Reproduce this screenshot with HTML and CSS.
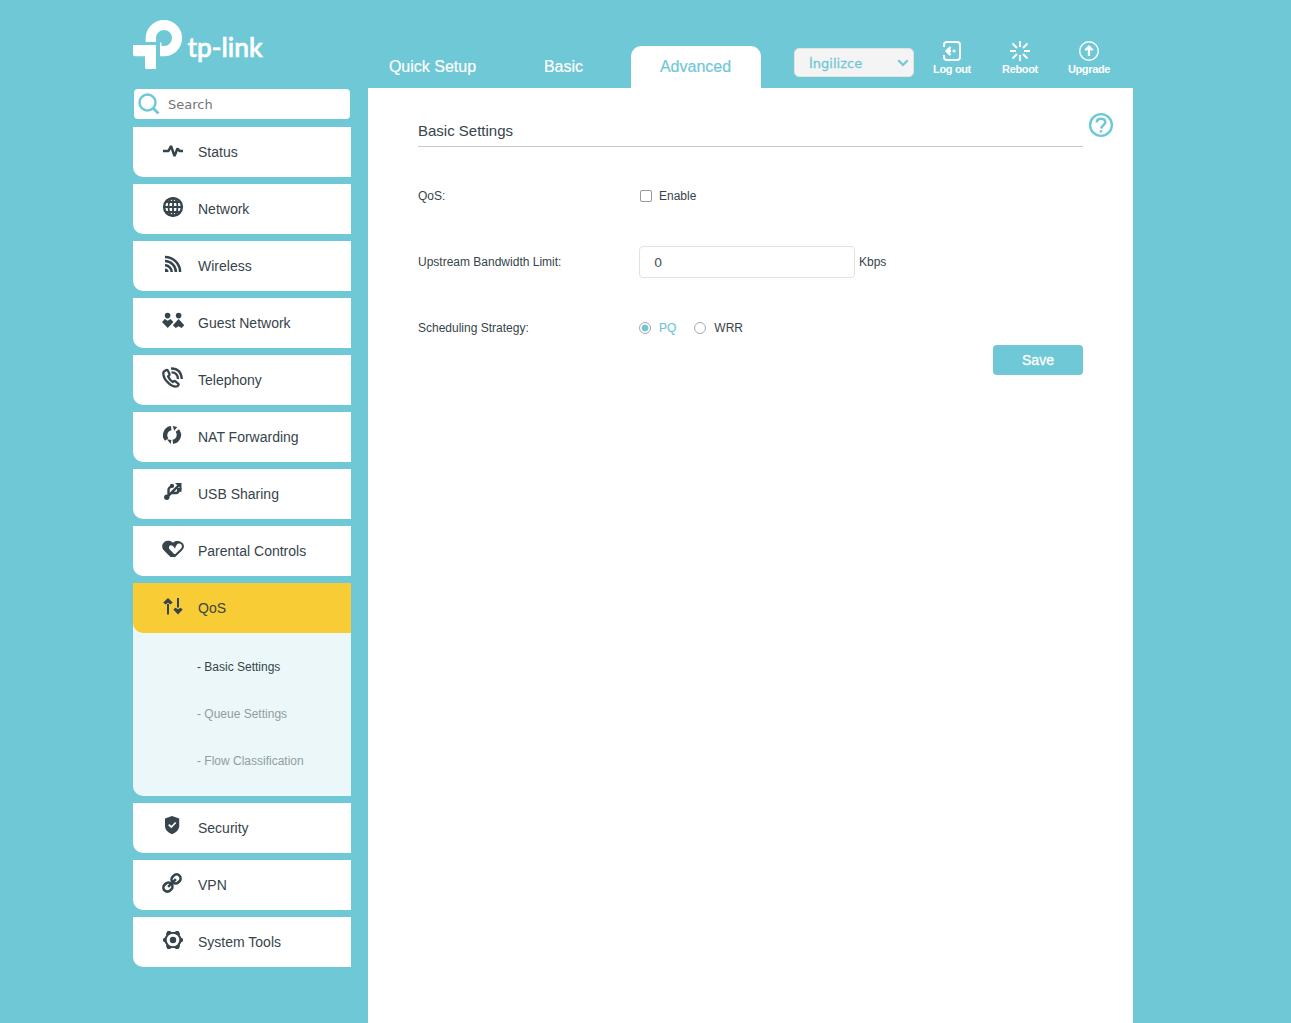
FILE: index.html
```html
<!DOCTYPE html>
<html lang="en">
<head>
<meta charset="utf-8">
<title>TP-Link Router</title>
<link rel="stylesheet" href="styles.css">
</head>
<body>
<div class="page">
  <header class="header">
    <svg class="logo" width="140" height="56" viewBox="0 0 140 56" fill="#fff">
      <path d="M12.7 24V20A18.2 18.2 0 1 1 31 38.3H27V24.500H28.500V28H31A8 8 0 1 0 23 20V24Z"/>
      <path d="M0 27H23V51H13.500Q12 51 12 49.500V38.300H2Q0 38.300 0 36.300Z"/>
      <text class="logo-text" x="54.500" y="38.500" textLength="75" lengthAdjust="spacingAndGlyphs">tp-link</text>
    </svg>
    <nav class="tabs">
      <a class="tab quick">Quick Setup</a>
      <a class="tab">Basic</a>
      <a class="tab active">Advanced</a>
    </nav>
    <div class="language">İngilizce
      <svg width="12" height="8" viewBox="0 0 12 8"><path d="M1.300 1.300 6 6 10.700 1.300" fill="none" stroke="#6fc8d6" stroke-width="2.200"/></svg>
    </div>
    <div class="actions">
      <a class="action logout"><svg width="22" height="22" viewBox="0 0 22 22" fill="none" stroke="#fff" stroke-width="2"><path d="M3 7V5Q3 2 6 2H16Q19 2 19 5V17Q19 20 16 20H6Q3 20 3 17V15"/><path d="M9.500 7 5.700 11 9.500 15M6 11H10M11.700 11H14.500" stroke-width="2.500"/></svg>Log out</a>
      <a class="action reboot"><svg width="22" height="22" viewBox="0 0 22 22" fill="none" stroke="#fff" stroke-width="2"><path d="M11 1V7M11 15V21M1 11H7M15 11H21M3.500 3.500 8 8M14 14 18.500 18.500M18.500 3.500 14 8M8 14 3.500 18.500"/></svg>Reboot</a>
      <a class="action upgrade"><svg width="22" height="22" viewBox="0 0 22 22" fill="none" stroke="#fff"><circle cx="11" cy="11" r="9.300" stroke-width="1.400"/><path d="M11 6V16M7.300 10.300 11 6.700 14.700 10.300" stroke-width="2.300"/></svg>Upgrade</a>
    </div>
  </header>
  <div class="columns">
    <aside class="sidebar">
      <label class="search">
        <svg width="22" height="22" viewBox="0 0 22 22" fill="none" stroke="#6fc8d6"><circle cx="9.500" cy="9.500" r="8" stroke-width="2.400"/><path d="M15 15 20.500 20.500" stroke-width="2.800"/></svg>
        <input type="text" placeholder="Search">
      </label>
      <ul class="menu">
        <li class="item"><svg class="icon" viewBox="0 0 24 50"><path class="line" stroke-width="2.500" stroke-linejoin="bevel" d="M2 24H7.500L10 19 13.500 29 16.500 21.500 18.500 24H22"/></svg>Status</li>
        <li class="item"><svg class="icon" viewBox="0 0 24 50"><circle cx="12" cy="23" r="8.900" class="line"/><ellipse cx="12" cy="23" rx="4.500" ry="9" class="line thin"/><path class="line thin" d="M12 14V32M3 23H21M5 18H19M5 28H19"/></svg>Network</li>
        <li class="item"><svg class="icon" viewBox="0 0 24 50"><path d="M4 31V27.500A3.500 3.500 0 0 1 7.500 31Z"/><path class="line" stroke-width="2.500" d="M4 24.300A6.700 6.700 0 0 1 10.700 31M4 20.100A10.900 10.900 0 0 1 14.900 31M4 15.900A15.100 15.100 0 0 1 19.100 31"/></svg>Wireless</li>
        <li class="item"><svg class="icon" viewBox="0 0 24 50"><circle cx="6.600" cy="17.600" r="2.800"/><circle cx="17.600" cy="17.600" r="2.800"/><path d="M1 24 3.800 21 6.700 22.800 9.600 21 12.400 24 6.700 30ZM11.900 27.200 17.600 21 23.300 27.200 20.500 30 17.600 28.200 14.700 30Z"/></svg>Guest Network</li>
        <li class="item"><svg class="icon" viewBox="0 0 24 50"><path class="line" stroke-width="2.300" stroke-linejoin="round" d="M3.300 16.200 5.300 15Q6.300 14.700 6.800 15.600L8.500 19Q8.800 20 7.800 20.700L7 21.300Q8.600 25 11.700 27L12.700 26.300Q13.600 25.700 14.400 26.300L17.500 28.800Q18 29.500 17.300 30.300L16.300 31.200C12 33 2 25.500 2.300 18Q2.400 16.800 3.300 16.200ZM10 13.500Q20 13.300 20.800 24M10.500 17.400Q16.500 17.300 17 24"/></svg>Telephony</li>
        <li class="item"><svg class="icon" viewBox="0 0 24 50"><path class="line" stroke-width="4.300" d="M10.200 16.100A7 7 0 0 0 5.700 27.500M11.800 29.900A7 7 0 0 0 16.300 18.500"/><path d="M11.700 14 16.200 15 13.300 18.800ZM5.800 27.200 10.300 28 9.800 32Z"/></svg>NAT Forwarding</li>
        <li class="item"><svg class="icon" viewBox="0 0 24 50"><circle cx="5.800" cy="28.300" r="2.700"/><path d="M14 14H20.500V20.500Z"/><path class="line" stroke-width="2.400" d="M5.800 28.300 18 16.200M7.500 26V20.700Q7.500 19.500 8.600 18.600L11 16.700M10.500 24H15Q16.300 24 17 23L18.700 20.500"/><circle cx="11" cy="16.900" r="2.100"/><path d="M16 19H20.500V22.800H16Z"/></svg>USB Sharing</li>
        <li class="item"><svg class="icon" viewBox="0 0 24 50"><path d="M12 16.700C9 14 5.500 14.700 3.700 15.800C.5 18 .5 22 3 24.500L9.500 31H13L20 24.500 20 17C18 14 14 14.500 12 16.700Z"/><path d="M13.700 30 8.100 24.300C5.800 21.600 7.200 18.600 9.500 18.200 11.500 18 12.800 19 13.700 20.500 14.800 17.500 17 15.900 19.300 16.600 22.700 18 22.600 21.600 20.500 23.500Z" fill="#fff" stroke="#36444b" stroke-width="2"/></svg>Parental Controls</li>
        <li class="group">
          <div class="item selected"><svg class="icon" viewBox="0 0 24 50"><path d="M6 21H8V31.500H6ZM7 15 11.700 19.500 9.500 21.500 7 19.700 4.500 21.500 2.300 19.500ZM16 15H18V24.500H16ZM17 31.500 21.700 26.600 19.500 24.700 17 26.300 14.500 24.700 12.300 26.600Z"/></svg>QoS</div>
          <ul class="submenu">
            <li class="current">- Basic Settings</li>
            <li>- Queue Settings</li>
            <li>- Flow Classification</li>
          </ul>
        </li>
        <li class="item"><svg class="icon" viewBox="0 0 24 50"><path d="M11 13 18.200 15.500V23.500Q17.500 28.700 11 31.200 4.500 28.700 4 23.500V15.500Z"/><path d="M7.700 21.700 10.300 24 14.700 19.500" fill="none" stroke="#fff" stroke-width="1.700"/></svg>Security</li>
        <li class="item"><svg class="icon" viewBox="0 0 24 50"><g class="line" stroke-width="2.600" transform="rotate(-45 11 23)"><rect x="0.500" y="19" width="9.500" height="8" rx="4"/><rect x="12" y="19" width="9.500" height="8" rx="4"/><path d="M5.500 23H16.500"/></g></svg>VPN</li>
        <li class="item"><svg class="icon" viewBox="0 0 24 50"><circle cx="12" cy="23" r="3.200"/><path d="M6.500 14H9.300L10 15H14L14.700 14H17.500L19 16.800 18.700 18 20.500 21 22 21.700V24.300L20.500 25 18.700 28 19 29.200 17.500 32H14.700L14 31H10L9.300 32H6.500L5 29.200 5.300 28 3.500 25 2 24.300V21.700L3.500 21 5.300 18 5 16.800ZM12 16.700A6.300 6.300 0 1 0 12 29.300A6.300 6.300 0 1 0 12 16.700Z" fill-rule="evenodd"/></svg>System Tools</li>
      </ul>
    </aside>
    <main class="content">
      <svg class="help" width="26" height="26" viewBox="0 0 26 26" fill="none" stroke="#6fc8d6"><circle cx="13" cy="13" r="10.900" stroke-width="2.400"/><path d="M8.700 10.500Q8.700 6.700 13 6.700T17.300 10.200Q17.300 11.700 15.600 12.900T13 16.500" stroke-width="2.500"/><path d="M13 18.200V20.500" stroke-width="2.500"/></svg>
      <h1 class="title">Basic Settings</h1>
      <form class="form">
        <div class="row"><span class="label">QoS:</span><label class="choice"><span class="checkbox"></span>Enable</label></div>
        <div class="row"><span class="label">Upstream Bandwidth Limit:</span><input class="field" type="text" value="0"><span class="unit">Kbps</span></div>
        <div class="row"><span class="label">Scheduling Strategy:</span><label class="choice chosen"><span class="radio"></span>PQ</label><label class="choice"><span class="radio"></span>WRR</label></div>
        <button class="save" type="button">Save</button>
      </form>
    </main>
  </div>
</div>
</body>
</html>
```
FILE: styles.css
```css
* { box-sizing: border-box; }
body {
  margin: 0;
  background: #6fc8d6;
  color: #36444b;
  font-family: "Liberation Sans", Arial, sans-serif;
  font-size: 12px;
}
ul { list-style: none; margin: 0; padding: 0; }
.page {
  width: 1000px;
  height: 1023px;
  margin-left: 133px;
  display: flex;
  flex-direction: column;
}
.header { display: flex; height: 88px; align-items: flex-start; }
.logo { margin-top: 18px; flex: none; }
.logo-text { font-family: Lato, sans-serif; font-size: 27px; font-weight: 500; stroke: #fff; stroke-width: 0.7px; }
.tabs { display: flex; align-items: flex-end; height: 88px; margin-left: 94px; font-size: 16px; color: #fff; -webkit-text-stroke: 0.2px; }
.tab { width: 131px; height: 42px; line-height: 41px; text-align: center; }
.tab.quick { width: 131px; }
.tab.active { width: 130px; margin-left: 2px; padding-right: 1px; background: #fff; color: #6fc8d6; border-radius: 10px 10px 0 0; }
.language {
  display: flex;
  align-items: center;
  justify-content: space-between;
  width: 120px;
  height: 29px;
  margin: 48px 0 0 33px;
  padding: 1px 4px 0 14px;
  border: 1px solid #e2e2e2;
  border-radius: 5px;
  background: #f4f4f4;
  color: #6fc8d6;
  font-family: "DejaVu Sans", Verdana, sans-serif;
  font-size: 13px;
  -webkit-text-stroke: 0.3px #6fc8d6;
}
.actions { display: flex; margin: 40px 0 0 4px; color: #fff; font-size: 11px; font-weight: bold; letter-spacing: -0.35px; }
.action { display: flex; flex-direction: column; align-items: center; width: 68px; line-height: 14px; white-space: nowrap; }
.action.upgrade { width: 70px; }
.columns { display: flex; flex: 1; gap: 17px; }
.sidebar { width: 218px; padding-top: 1px; }
.search {
  display: flex;
  align-items: center;
  width: 216px;
  height: 30px;
  margin: 0 1px 8px;
  padding-left: 4px;
  border-radius: 4px;
  background: #fff;
}
.search input {
  width: 170px;
  margin-left: 8px;
  padding: 0;
  border: 0;
  outline: 0;
  background: none;
  font: 13px "DejaVu Sans", Verdana, sans-serif;
}
.search input::placeholder { color: #757575; }
.menu { display: flex; flex-direction: column; gap: 7px; }
.item {
  display: flex;
  align-items: center;
  gap: 13px;
  height: 50px;
  padding-left: 28px;
  border-bottom-left-radius: 10px;
  background: #fff;
  font-size: 14px;
}
.item.selected { background: #f8cc34; }
.icon { width: 24px; height: 50px; fill: #36444b; }
.line { fill: none; stroke: #36444b; }
circle.line { stroke-width: 2.4px; }
.thin { stroke-width: 1.8px; }
.group { height: 213px; border-bottom-left-radius: 10px; background: #ecf7f9; }
.submenu { padding: 11px 0 0 64px; color: #8f9ea1; }
.submenu li { height: 47px; line-height: 47px; }
.submenu .current { color: #36444b; }
.content { position: relative; width: 765px; padding: 31px 50px 0; background: #fff; }
.help { position: absolute; top: 24px; right: 19px; }
.title {
  height: 28px;
  margin: 0;
  padding-top: 3px;
  border-bottom: 1px solid #c8c8c8;
  font-size: 15px;
  font-weight: normal;
}
.form { display: flex; flex-direction: column; padding-top: 16px; }
.row { display: flex; align-items: center; height: 66px; }
.label { width: 221px; }
.choice { display: flex; align-items: center; margin-right: 18px; }
.checkbox { width: 12px; height: 12px; margin: 0 7px 0 1px; border: 1px solid #999; border-radius: 2px; }
.radio { width: 12px; height: 12px; margin-right: 8px; border: 1px solid #aaa; border-radius: 50%; }
.chosen { color: #6fc8d6; -webkit-text-stroke: 0.2px; }
.chosen .radio { background: radial-gradient(circle, #6fc8d6 3px, #fff 3.8px); }
.field {
  width: 216px;
  height: 32px;
  padding: 1px 0 0 14px;
  border: 1px solid #e2e2e2;
  border-radius: 4px;
  color: #555;
  font: 13px "DejaVu Sans", Verdana, sans-serif;
}
.unit { margin-left: 4px; }
.save {
  align-self: flex-end;
  width: 90px;
  height: 30px;
  margin-top: -16px;
  border: 0;
  border-radius: 4px;
  background: #6fc8d6;
  color: #fff;
  font: 14px "Liberation Sans", Arial, sans-serif;
  -webkit-text-stroke: 0.3px #fff;
}
```
